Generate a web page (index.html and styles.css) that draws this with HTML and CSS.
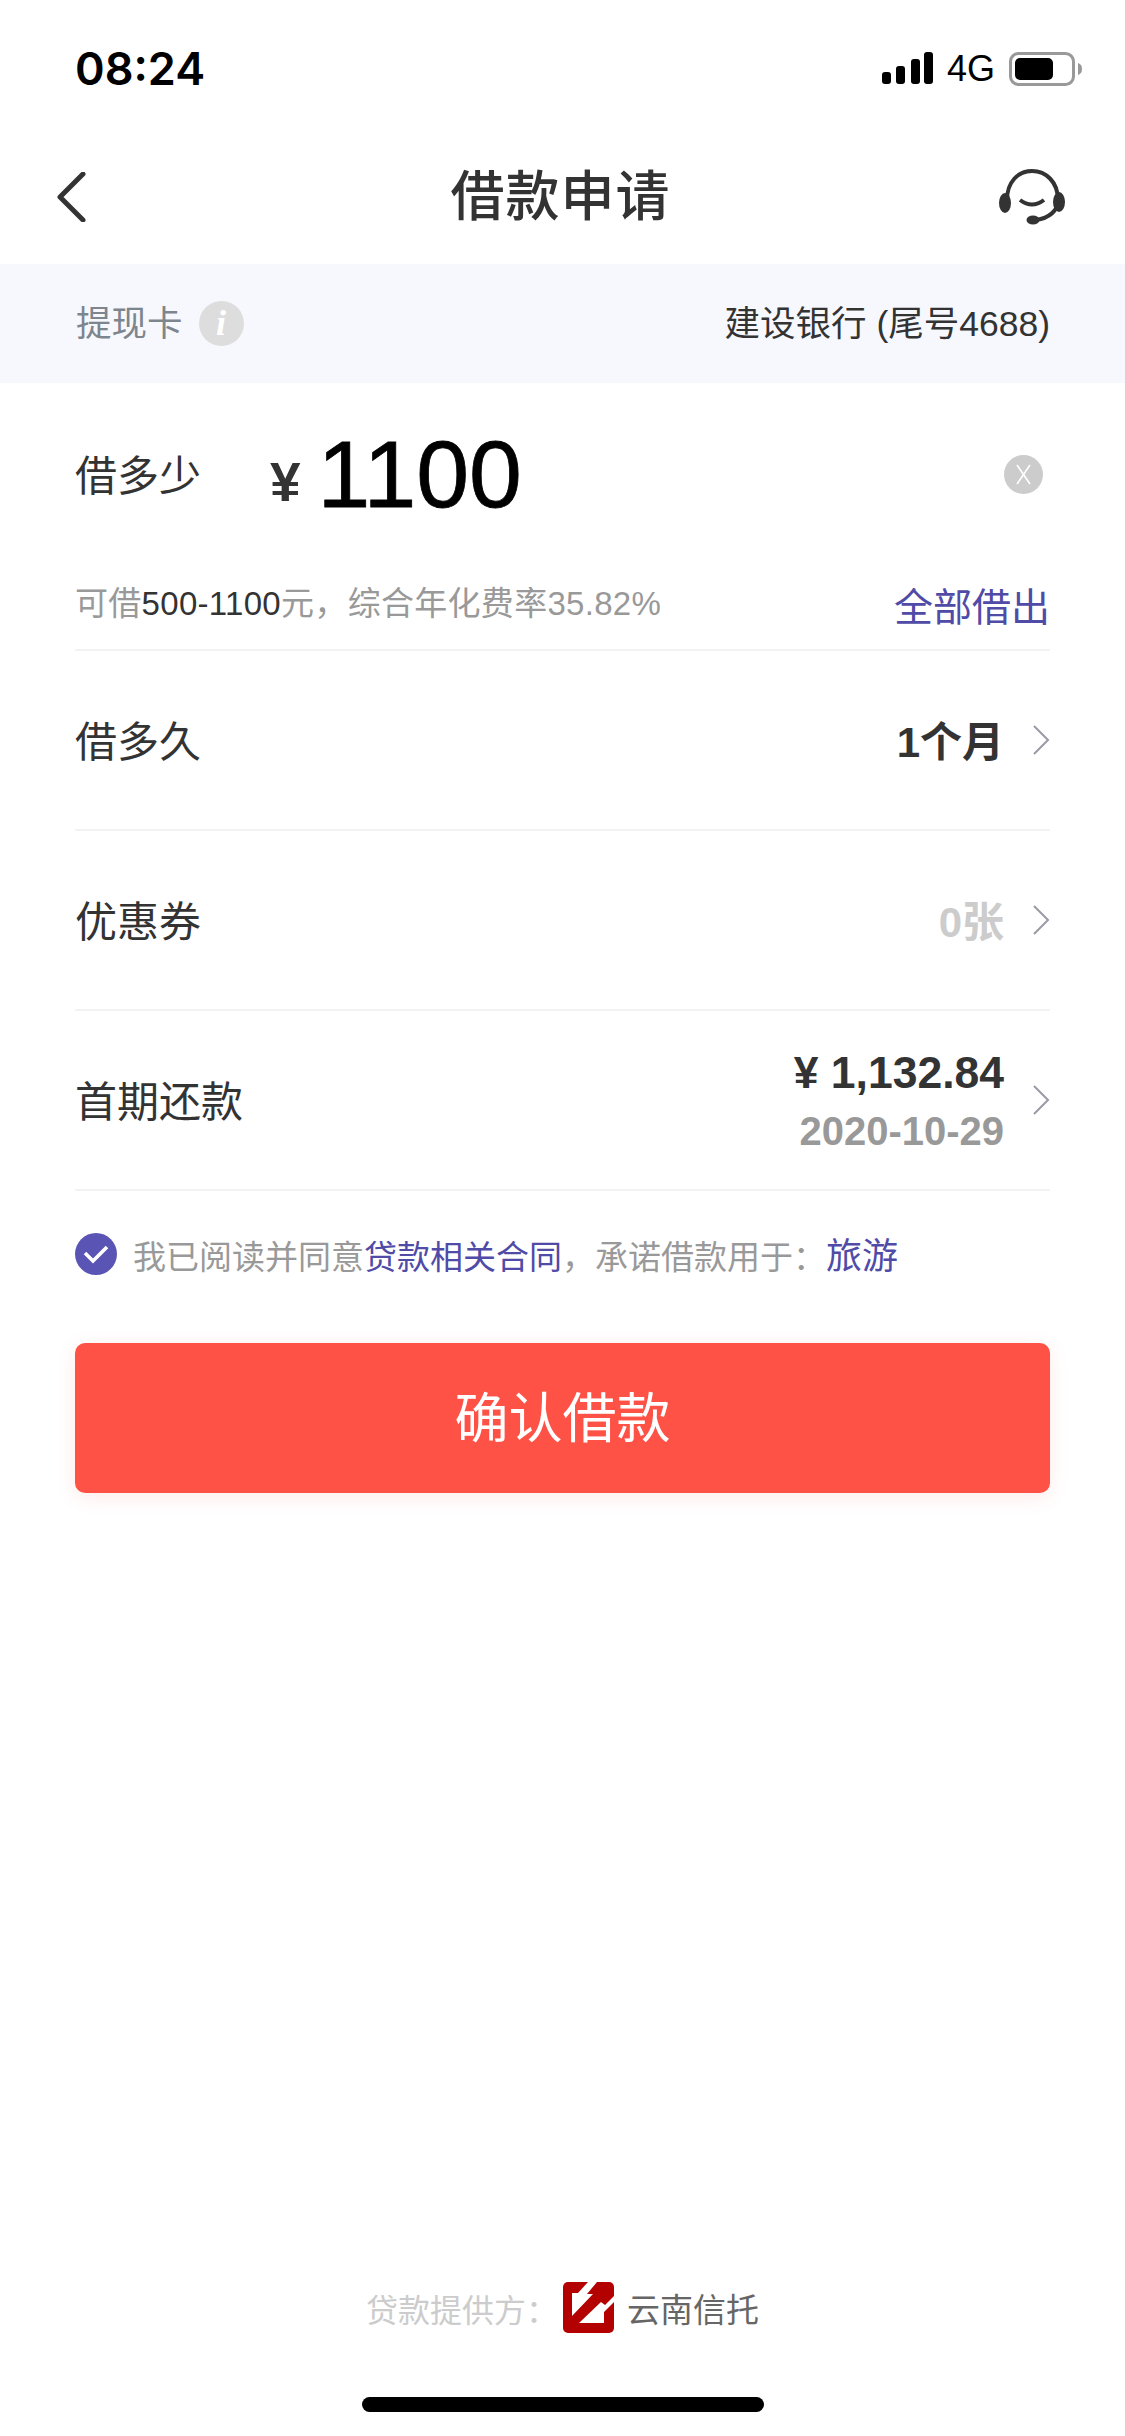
FILE: index.html
```html
<!DOCTYPE html>
<html lang="zh-CN">
<head>
  <meta charset="UTF-8">
  <meta name="viewport" content="width=device-width, initial-scale=1">
  <title>借款申请</title>
  <link rel="stylesheet" href="styles.css">
</head>
<body>
  <div class="status-bar">
    <span class="clock">08:24</span>
    <div class="status-right">
      <svg width="51" height="32" viewBox="0 0 51 32">
        <rect x="0" y="20" width="9" height="12" rx="3" fill="#000"/>
        <rect x="14" y="14" width="9" height="18" rx="3" fill="#000"/>
        <rect x="29" y="7" width="9" height="25" rx="3" fill="#000"/>
        <rect x="42" y="0" width="9" height="32" rx="3" fill="#000"/>
      </svg>
      <span class="network">4G</span>
      <svg width="73" height="34" viewBox="0 0 73 34">
        <rect x="1.5" y="1.5" width="63" height="31" rx="8" fill="none" stroke="#999" stroke-width="3"/>
        <rect x="6" y="6" width="38" height="22" rx="5" fill="#000"/>
        <path d="M69 11c3 1 4 3 4 6s-1 5-4 6z" fill="#999"/>
      </svg>
    </div>
  </div>

  <nav class="nav">
    <svg class="nav-back" width="30" height="50" viewBox="0 0 30 50">
      <path d="M27 2L4 25l23 23" fill="none" stroke="#333" stroke-width="5" stroke-linecap="round" stroke-linejoin="round"/>
    </svg>
    <h1>借款申请</h1>
    <svg class="nav-service" width="66" height="56" viewBox="0 0 66 56">
      <path d="M8 31C8 13 19 2 33 2s26 11 26 29c0 11-9 18-22 20" fill="none" stroke="#333" stroke-width="4"/>
      <ellipse cx="6" cy="34" rx="6" ry="10" fill="#333"/>
      <ellipse cx="60" cy="33" rx="6" ry="10" fill="#333"/>
      <ellipse cx="34" cy="51" rx="6.5" ry="4.5" fill="#333"/>
      <path d="M21 31q12 9 24 0" fill="none" stroke="#333" stroke-width="4"/>
    </svg>
  </nav>

  <div class="card-band">
    <div class="card-left">
      <span class="card-label">提现卡</span>
      <span class="info-icon">i</span>
    </div>
    <span class="card-name">建设银行 (尾号4688)</span>
  </div>

  <main class="content">
    <div class="amount-row">
      <span class="row-label">借多少</span>
      <span class="yen">¥</span>
      <span class="amount">1100</span>
      <svg class="clear-icon" width="39" height="39" viewBox="0 0 39 39">
        <circle cx="19.5" cy="19.5" r="19.5" fill="#ccc"/>
        <path d="M13 10l13 19M26 10L13 29" stroke="#fff" stroke-width="1.6" fill="none"/>
      </svg>
    </div>
    <div class="hint-row">
      <span class="hint">可借<b>500-1100</b>元，综合年化费率35.82%</span>
      <a class="link-all">全部借出</a>
    </div>

    <div class="row">
      <span class="row-label">借多久</span>
      <div class="row-right">
        <span class="row-value">1个月</span>
        <svg class="chevron" width="18" height="30" viewBox="0 0 18 30"><path d="M2 1l14 14L2 29" fill="none" stroke="#9a9aa6" stroke-width="2"/></svg>
      </div>
    </div>
    <div class="row">
      <span class="row-label">优惠券</span>
      <div class="row-right">
        <span class="row-value muted">0张</span>
        <svg class="chevron" width="18" height="30" viewBox="0 0 18 30"><path d="M2 1l14 14L2 29" fill="none" stroke="#9a9aa6" stroke-width="2"/></svg>
      </div>
    </div>
    <div class="row">
      <span class="row-label">首期还款</span>
      <div class="row-right">
        <div class="repay">
          <span class="repay-amount">¥ 1,132.84</span>
          <span class="repay-date">2020-10-29</span>
        </div>
        <svg class="chevron" width="18" height="30" viewBox="0 0 18 30"><path d="M2 1l14 14L2 29" fill="none" stroke="#9a9aa6" stroke-width="2"/></svg>
      </div>
    </div>

    <div class="agree">
      <svg width="42" height="42" viewBox="0 0 42 42">
        <circle cx="21" cy="21" r="21" fill="#5a55b5"/>
        <path d="M10 20l8 8 14-14" fill="none" stroke="#fff" stroke-width="3.6"/>
      </svg>
      <span class="agree-text">我已阅读并同意<a>贷款相关合同</a>，承诺借款用于：<a class="purpose">旅游</a></span>
    </div>

    <button class="submit" type="button">确认借款</button>
  </main>

  <footer class="footer">
    <span class="provider-label">贷款提供方：</span>
    <svg width="51" height="51" viewBox="0 0 51 51">
      <rect width="51" height="51" rx="5" fill="#b30000"/>
      <path d="M25 0h9L24 12h6L9 34V11h6z" fill="#fff"/>
      <path d="M51 14v6L41 30v11H16l22-21 4 3z" fill="#fff"/>
    </svg>
    <span class="provider-name">云南信托</span>
  </footer>
  <div class="home-bar"></div>
</body>
</html>
```

FILE: styles.css
```css
* {
  box-sizing: border-box;
}
body {
  margin: 0;
  height: 2436px;
  display: flex;
  flex-direction: column;
  background: #fff;
  color: #333;
  font-family: "Liberation Sans", "Noto Sans CJK SC", sans-serif;
}
.status-bar {
  height: 130px;
  padding: 52px 43px 0 75px;
  display: flex;
  justify-content: space-between;
  align-items: flex-start;
}
.clock {
  font-family: Inter, "Liberation Sans", sans-serif;
  font-size: 45px;
  font-weight: 600;
  line-height: 34px;
  color: #000;
}
.status-right {
  display: flex;
  align-items: flex-start;
  gap: 14px;
}
.network {
  font-size: 36px;
  line-height: 34px;
  color: #000;
}
.nav {
  height: 134px;
  padding: 0 60px 0 56px;
  display: grid;
  grid-template-columns: 1fr auto 1fr;
  align-items: center;
}
.nav h1 {
  margin: 0;
  font-size: 54px;
  font-weight: 500;
  letter-spacing: 1px;
  line-height: 70px;
}
.nav-service {
  justify-self: end;
}
.card-band {
  height: 119px;
  padding: 0 75px 0 76px;
  display: flex;
  justify-content: space-between;
  align-items: center;
  background: #f7f8fe;
  font-size: 35.5px;
}
.card-left {
  display: flex;
  align-items: center;
  gap: 16px;
  color: #7d858d;
}
.card-label,
.card-name {
  margin-bottom: 6px;
}
.info-icon {
  width: 45px;
  height: 45px;
  border-radius: 50%;
  background: #ddd;
  color: #fff;
  font-family: "Liberation Serif", serif;
  font-size: 36px;
  font-style: italic;
  font-weight: bold;
  line-height: 45px;
  text-align: center;
}
.content {
  flex: 1;
  padding: 0 75px;
}
.row-label {
  font-size: 42px;
  color: #333;
}
.amount-row {
  height: 183px;
  display: flex;
  align-items: center;
}
.amount-row .row-label {
  width: 195px;
  margin-bottom: 5px;
}
.yen {
  font-size: 55px;
  font-weight: bold;
  color: #333;
  margin: 15px 17px 0 0;
}
.amount {
  font-size: 95px;
  color: #000;
  -webkit-text-stroke: 0.8px #000;
}
.clear-icon {
  margin-left: auto;
  margin-right: 7px;
}
.hint-row {
  height: 85px;
  padding-bottom: 14px;
  display: flex;
  justify-content: space-between;
  align-items: center;
  border-bottom: 2px solid #f2f2f2;
}
.hint {
  font-size: 33px;
  letter-spacing: 0.3px;
  color: #999;
}
.hint b {
  font-weight: normal;
  color: #333;
}
.link-all {
  margin-top: 6px;
  font-size: 39px;
  color: #4f4ba6;
}
.row {
  height: 180px;
  display: flex;
  justify-content: space-between;
  align-items: center;
  border-bottom: 2px solid #f2f2f2;
}
.row .row-label {
  margin-bottom: 3px;
}
.row-right {
  display: flex;
  align-items: center;
  gap: 28px;
}
.row-value {
  margin-bottom: 3px;
  font-size: 42px;
  font-weight: bold;
  color: #333;
}
.muted {
  color: #ccc;
}
.repay {
  display: flex;
  flex-direction: column;
  align-items: flex-end;
  gap: 8px;
}
.repay-amount {
  font-size: 44.5px;
  font-weight: bold;
  line-height: 54px;
}
.repay-date {
  font-size: 40px;
  font-weight: bold;
  line-height: 46px;
  color: #999;
}
.agree {
  height: 129px;
  padding-bottom: 5px;
  display: flex;
  align-items: center;
  gap: 16px;
}
.agree svg {
  margin-top: 1px;
}
.agree-text {
  font-size: 33px;
  color: #999;
}
.agree-text a {
  color: #4f4ba6;
}
.agree-text .purpose {
  font-size: 36px;
}
.submit {
  display: block;
  width: 100%;
  height: 150px;
  margin-top: 23px;
  padding: 0 0 7px;
  border: none;
  border-radius: 10px;
  background: #ff5247;
  color: #fff;
  font-family: inherit;
  font-size: 54px;
  box-shadow: 0 4px 20px rgba(255, 82, 71, 0.12);
}
.footer {
  display: flex;
  justify-content: center;
  align-items: center;
  font-size: 32px;
  height: 51px;
  gap: 5px;
}
.provider-label {
  color: #ccc;
}
.provider-name {
  margin-left: 8px;
  font-size: 33px;
  color: #666;
}
.home-bar {
  width: 402px;
  height: 15px;
  margin: 64px auto 24px;
  border-radius: 8px;
  background: #000;
}
```
